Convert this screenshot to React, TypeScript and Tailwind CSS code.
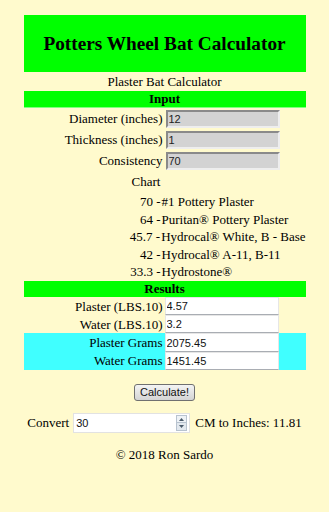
import React from "react";

const chart = [
  { v: "70", name: "#1 Pottery Plaster" },
  { v: "64", name: "Puritan® Pottery Plaster" },
  { v: "45.7", name: "Hydrocal® White, B - Base" },
  { v: "42", name: "Hydrocal® A-11, B-11" },
  { v: "33.3", name: "Hydrostone®" },
];

function InputRow({ label, value }: { label: string; value: string }) {
  return (
    <div className="grid grid-cols-[141px_141px] h-[21px] items-center">
      <span className="text-right pr-[2px] leading-none">{label}</span>
      <div className="pl-[1px] flex">
        <input
          readOnly
          defaultValue={value}
          className="w-[114px] h-[18px] bg-[#d3d3d3] border-2 border-t-[#8a8a8a] border-l-[#8a8a8a] border-r-[#eeeeee] border-b-[#eeeeee] px-[1px] text-[11px] text-[#222] font-['Liberation_Sans',sans-serif] outline-none"
        />
      </div>
    </div>
  );
}

function ResultRow({ label, value, hi }: { label: string; value: string; hi?: boolean }) {
  return (
    <div className={`grid grid-cols-[141px_141px] h-[18.25px] items-stretch ${hi ? "bg-[#40ffff]" : ""}`}>
      <span className="text-right pr-[2px] flex items-center justify-end leading-none">{label}</span>
      <div className="flex">
        <input
          readOnly
          defaultValue={value}
          className="w-[114px] h-full bg-white border border-[#e6e6e6] border-b-[#a9adb3] px-[1px] text-[11px] text-[#111] font-['Liberation_Sans',sans-serif] outline-none"
        />
      </div>
    </div>
  );
}

export default function App() {
  return (
    <div className="min-h-screen bg-[#fffacd] text-[13px] text-black font-['Liberation_Serif',serif]">
      <div className="mx-auto w-[282px] pt-[15px]">
        {/* header */}
        <div className="h-[57px] bg-[#00ff00] flex items-center justify-center">
          <h1 className="text-[19.3px] font-bold leading-none">Potters Wheel Bat Calculator</h1>
        </div>
        <div className="h-[19px] flex items-center justify-center">Plaster Bat Calculator</div>

        {/* input */}
        <div className="h-[17px] bg-[#00ff00] border-b border-[#80ff80] flex items-center justify-center font-bold">
          Input
        </div>
        <InputRow label="Diameter (inches)" value="12" />
        <InputRow label="Thickness (inches)" value="1" />
        <InputRow label="Consistency" value="70" />

        {/* chart */}
        <div className="h-[22px] flex items-center pl-[108px]">Chart</div>
        {chart.map((c) => (
          <div key={c.v} className="h-[17.6px] flex items-center">
            <span className="w-[137px] text-right whitespace-nowrap">{c.v} -</span>
            <span className="pl-[1px] whitespace-nowrap">{c.name}</span>
          </div>
        ))}

        {/* results */}
        <div className="h-[16px] bg-[#00ff00] flex items-center justify-center font-bold">Results</div>
        <ResultRow label="Plaster (LBS.10)" value="4.57" />
        <ResultRow label="Water (LBS.10)" value="3.2" />
        <ResultRow label="Plaster Grams" value="2075.45" hi />
        <ResultRow label="Water Grams" value="1451.45" hi />
      </div>

      <div className="flex justify-center mt-[14px]">
        <button className="w-[61px] h-[17px] rounded-[3px] border border-[#707070] bg-gradient-to-b from-[#f4f4f4] to-[#d4d4d4] text-[11px] leading-none text-[#111] font-['Liberation_Sans',sans-serif]">
          Calculate!
        </button>
      </div>

      <div className="flex items-center justify-center mt-[12px] h-[20px]">
        <span>Convert</span>
        <div className="ml-[4px] w-[117px] h-[20px] flex items-center bg-white border border-[#e2e2e2]">
          <input
            readOnly
            defaultValue="30"
            className="flex-1 min-w-0 h-full px-[2px] text-[11px] text-[#111] font-['Liberation_Sans',sans-serif] outline-none bg-transparent"
          />
          <div className="w-[11px] h-[16px] mr-[2px] flex flex-col border border-[#b8c3cf]">
            <div className="flex-1 flex items-center justify-center bg-[#eef2f6] border-b border-[#b8c3cf]">
              <svg width="5" height="3" viewBox="0 0 5 3"><path d="M0 3 L2.5 0 L5 3 Z" fill="#4a5a6a" /></svg>
            </div>
            <div className="flex-1 flex items-center justify-center bg-[#e2e8ee]">
              <svg width="5" height="3" viewBox="0 0 5 3"><path d="M0 0 L2.5 3 L5 0 Z" fill="#4a5a6a" /></svg>
            </div>
          </div>
        </div>
        <span className="ml-[5px]">CM to Inches: 11.81</span>
      </div>

      <div className="text-center mt-[12px]">© 2018 Ron Sardo</div>
    </div>
  );
}
